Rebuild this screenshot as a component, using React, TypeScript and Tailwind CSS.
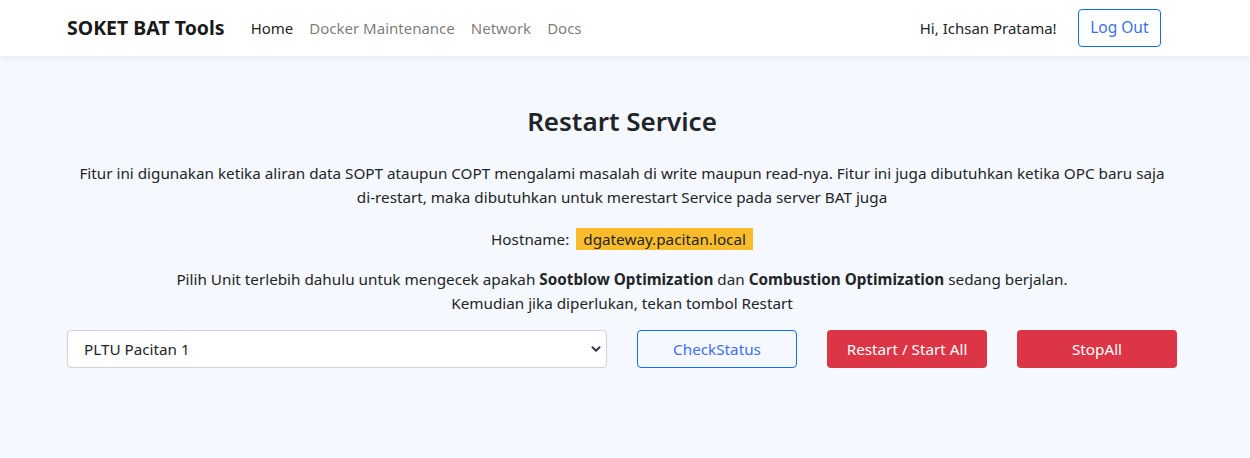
import { ChevronDown } from "lucide-react";

const font = { fontFamily: '"Segoe UI", "Noto Sans", Roboto, sans-serif' };

function Navbar() {
  return (
    <nav className="bg-white h-14 shadow-[0_2px_6px_rgba(0,0,0,0.06)] relative">
      <div className="w-[1110px] ml-[67px] h-full flex items-center">
        <span className="text-[19.5px] font-bold text-[#1a1a1a] mr-[26px]">SOKET BAT Tools</span>
        <ul className="flex items-center gap-4 text-[15px]">
          <li className="text-black/90">Home</li>
          <li className="text-black/55">Docker Maintenance</li>
          <li className="text-black/55">Network</li>
          <li className="text-black/55">Docs</li>
        </ul>
        <div className="ml-auto flex items-center mr-4">
          <span className="text-[15px] text-[#212529] mr-[21px]">Hi, Ichsan Pratama!</span>
          <button className="h-[38px] px-[11.5px] border border-[#0d6efd] text-[#3d6fe8] rounded-[4px] text-[15.5px]">
            Log Out
          </button>
        </div>
      </div>
    </nav>
  );
}

export default function App() {
  return (
    <div style={font} className="min-h-[458px] bg-[#f5f8fe] text-[#212529]">
      <Navbar />
      <main className="w-[1110px] ml-[67px] pt-[48px] text-center text-[15.25px] leading-6">
        <h2 className="text-[26px] font-semibold leading-[34px] mb-[23px]">Restart Service</h2>
        <p className="mb-[18px]">
          Fitur ini digunakan ketika aliran data SOPT ataupun COPT mengalami masalah di write maupun read-nya. Fitur
          ini juga dibutuhkan ketika OPC baru saja <span className="whitespace-nowrap">di-restart,</span> maka
          dibutuhkan untuk merestart Service pada server BAT juga
        </p>
        <p className="mb-[16px]">
          Hostname: <span className="bg-[#fbbc2b] px-[7px] py-[1px] ml-[3px]">dgateway.pacitan.local</span>
        </p>
        <p className="mb-[15px]">
          Pilih Unit terlebih dahulu untuk mengecek apakah <b>Sootblow Optimization</b> dan{" "}
          <b>Combustion Optimization</b> sedang berjalan.
          <br />
          Kemudian jika diperlukan, tekan tombol Restart
        </p>
        <div className="flex gap-[30px]">
          <div className="relative w-[540px] h-[38px]">
            <select className="w-full h-full appearance-none bg-white border border-[#ced4da] rounded-[4px] pl-[16px] text-[15.25px] text-[#212529] outline-none">
              <option>PLTU Pacitan 1</option>
              <option>PLTU Pacitan 2</option>
            </select>
            <ChevronDown
              size={14}
              strokeWidth={3.5}
              className="absolute right-[4px] top-[12px] text-[#343a40] pointer-events-none"
            />
          </div>
          <button className="w-[160px] h-[38px] border border-[#0d6efd] text-[#3d6fe8] rounded-[4px] bg-transparent">
            CheckStatus
          </button>
          <button className="w-[160px] h-[38px] bg-[#dc3545] text-white rounded-[4px]">Restart / Start All</button>
          <button className="w-[160px] h-[38px] bg-[#dc3545] text-white rounded-[4px]">StopAll</button>
        </div>
      </main>
    </div>
  );
}
